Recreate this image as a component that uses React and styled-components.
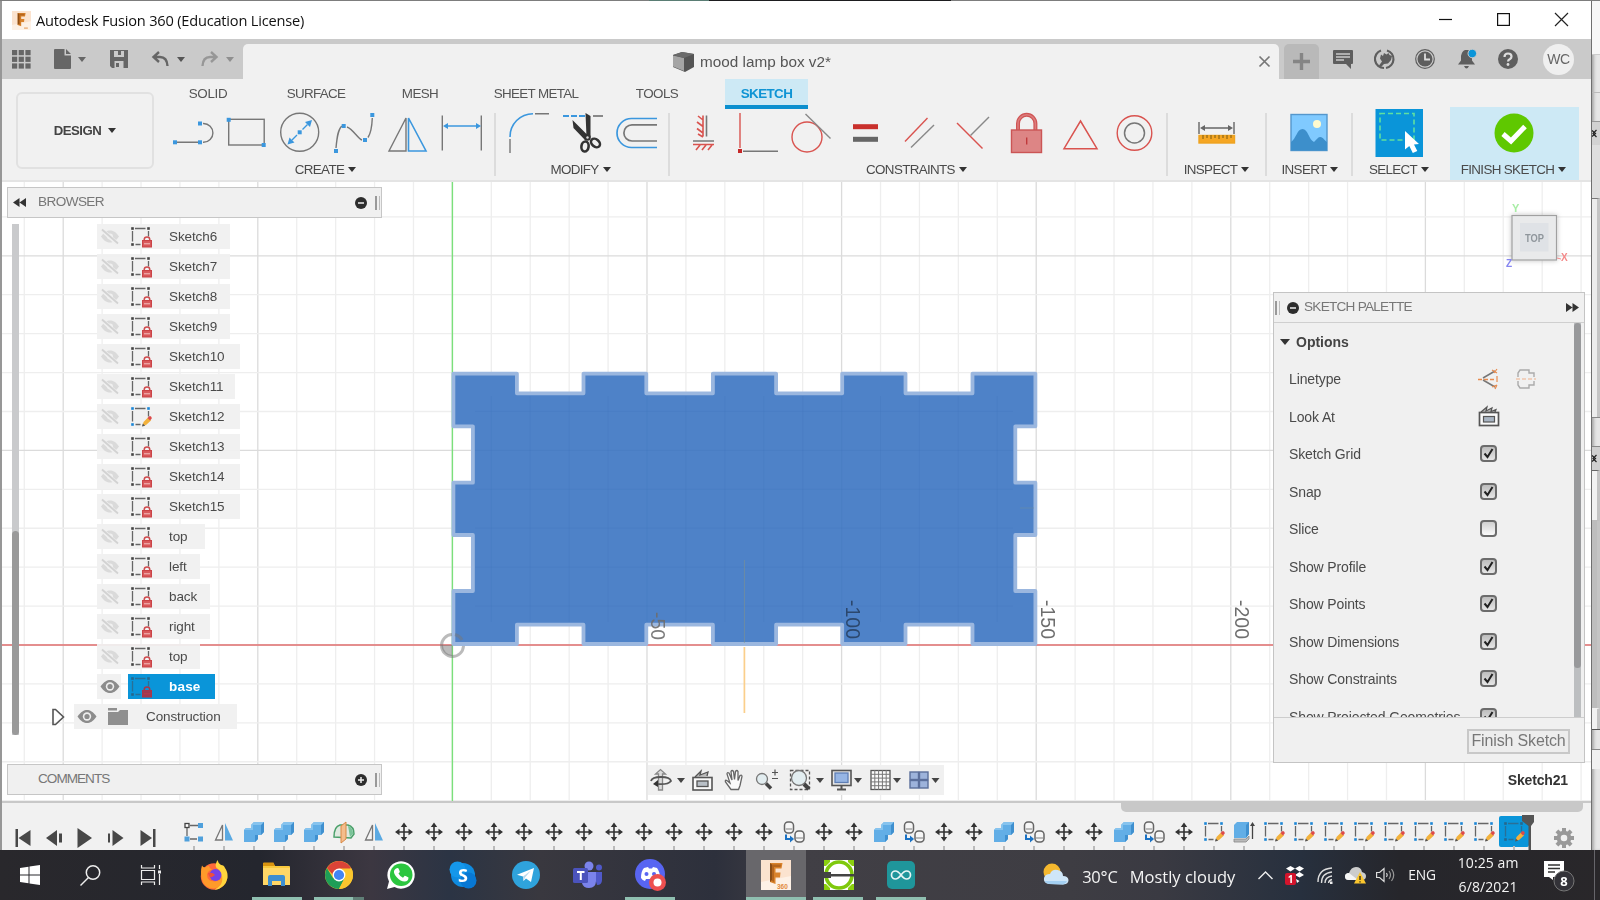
import React from "react";
import styled, { createGlobalStyle, css } from "styled-components";

const GlobalStyle = createGlobalStyle`
  * { box-sizing: border-box; }
  html, body { margin: 0; padding: 0; overflow: hidden; }
  body { font-family: "Liberation Sans", Arial, sans-serif; color: #4c4c4c; background: #e6e6e6; }
  svg { display: block; flex: none; overflow: visible; }
`;

const GREY = "#777";
const BLUE = "#3b97de";
const RED = "#d9534f";
const segoe = css`font-family: "Open Sans", "Noto Sans", sans-serif;`;

/* ---------- frame ---------- */
const Screen = styled.div`
  width: 1600px; height: 900px; display: flex; flex-direction: column; overflow: hidden; background: #e6e6e6;
`;
const TopEdge = styled.div`
  height: 1px; flex: none;
  background: linear-gradient(90deg, #7d7d7d 0 649px, #5a7d74 649px 709px, #1d1d1f 709px 951px, #7d7d7d 951px);
`;
const Desktop = styled.div`display: flex; height: 849px; flex: none;`;
const Window = styled.div`
  width: 1592px; flex: none; display: flex; flex-direction: column; background: #f1f1f1;
  border-left: 2px solid #979797; border-right: 1px solid #6f6f6f; overflow: hidden;
`;

/* ---------- title bar ---------- */
const TitleBar = styled.div`
  height: 38px; flex: none; display: flex; align-items: center; background: #fff; padding-left: 10px;
`;
const AppTitle = styled.div`
  ${segoe} font-size: 14.6px; letter-spacing: -0.2px; color: #111; margin-left: 5px; flex: 1; white-space: nowrap; padding-bottom: 1px;
`;
const WinButton = styled.div`width: 58px; height: 38px; display: flex; align-items: center; justify-content: center; padding-bottom: 1px;`;
const WinButtons = styled.div`display: flex; margin-right: 1px;`;

/* ---------- tab strip ---------- */
const TabStrip = styled.div`height: 40px; flex: none; display: flex; background: #cacaca;`;
const QuickAccess = styled.div`width: 241px; padding-left: 10px; display: flex; align-items: center;`;
const QuickItem = styled.div`
  width: ${(p) => p.$w}px; height: 40px; display: flex; align-items: center; gap: ${(p) => p.$gap || 10}px; opacity: ${(p) => (p.$dim ? 0.5 : 1)};
`;
const DocTab = styled.div`
  width: 1036px; margin-top: 5px; height: 35px; background: #f1f1f1; border-radius: 5px 5px 0 0; display: flex; align-items: center;
  padding: 0 9px 0 430px;
`;
const DocName = styled.div`font-size: 15.3px; color: #555; margin-left: 6px; flex: 1; white-space: nowrap; padding-top: 1px;`;
const NewTab = styled.div`
  width: 35px; height: 35px; margin: 5px 0 0 5px; background: #b9b9b9; border-radius: 5px 5px 0 0; display: flex; align-items: center; justify-content: center;
`;
const StripIcons = styled.div`display: flex; align-items: center; flex: 1; padding-left: 3px;`;
const StripIcon = styled.div`width: 41.4px; height: 40px; display: flex; align-items: center; justify-content: center;`;
const Avatar = styled.div`
  width: 31px; height: 31px; border-radius: 50%; background: #efefef; color: #666; font-size: 14px; margin-left: 14px;
  display: flex; align-items: center; justify-content: center; letter-spacing: -0.4px;
`;

/* ---------- ribbon ---------- */
const Ribbon = styled.div`height: 103px; flex: none; display: flex; background: #f1f1f1; border-bottom: 2px solid #e4e4e4;`;
const WorkspaceButton = styled.div`
  width: 138px; height: 77px; margin: 13px 10px 0 14px; border: 2px solid #e1e1e1; border-radius: 6px;
  display: flex; align-items: center; justify-content: center; gap: 7px; flex: none;
  font-size: 13.2px; font-weight: bold; color: #444; letter-spacing: -0.5px;
`;
const RibbonMain = styled.div`flex: 1; display: flex; flex-direction: column;`;
const RibbonTabs = styled.div`height: 30px; display: flex; flex: none;`;
const RibbonTab = styled.div`
  width: ${(p) => p.$w}px; margin-left: ${(p) => p.$ml}px; height: 30px; display: flex; align-items: center; justify-content: center;
  font-size: 13.4px; letter-spacing: ${(p) => p.$ls ?? -0.55}px; color: #555; white-space: nowrap; padding-bottom: 2px;
  ${(p) => p.$active && css`background: #cde9f5; color: #0f94d4; font-weight: bold; border-bottom: 4px solid #0a8fcf; padding-top: 2px; padding-bottom: 0;`}
`;
const Groups = styled.div`display: flex; height: 73px; margin-top: -2px;`;
const Group = styled.div`
  width: ${(p) => p.$w}px; display: flex; flex-direction: column; align-items: center; flex: none; position: relative;
  background: ${(p) => (p.$finish ? "#cde9f5" : "none")};
  padding-right: ${(p) => p.$pr || 0}px;
  &::after { content: ""; position: absolute; right: 0; top: 6px; height: 63px; width: ${(p) => (p.$last ? 0 : 2)}px; background: #dcdcdc; }
`;
const Tools = styled.div`display: flex; height: 52px; align-items: center;`;
const GroupLabel = styled.div`
  display: flex; align-items: center; gap: 4px; font-size: 13.4px; letter-spacing: -0.65px; color: #4a4a4a; height: 20px; white-space: nowrap;
  padding: 0 ${(p) => p.$padR || 0}px 0 ${(p) => p.$padL || 0}px;
`;
const Caret = styled.i`
  width: 0; height: 0; border: ${(p) => p.$s || 4.5}px solid transparent; border-top: ${(p) => (p.$s || 4.5) + 1}px solid ${(p) => p.$c || "#333"}; border-bottom: 0; flex: none;
`;

/* ---------- viewport ---------- */
const Viewport = styled.div`height: 619px; flex: none; position: relative; background: #fff; overflow: hidden;`;
const Scene = styled.svg`position: absolute; left: 0; top: 0;`;
const Overlay = styled.div`position: relative; height: 100%; display: flex; justify-content: space-between;`;
const LeftColumn = styled.div`width: 375px; margin-left: 5px; padding: 5px 0 6px; display: flex; flex-direction: column;`;
const PanelHead = styled.div`
  height: 31px; flex: none; background: #f0f0f0; border: 1px solid #c6c6c6; display: flex; align-items: center; padding: 0 1px 0 5px;
  font-size: 13.6px; color: #777;
`;
const PanelTitle = styled.div`flex: 1; padding: 0 0 2px ${(p) => p.$pl}px; white-space: nowrap; letter-spacing: ${(p) => p.$ls}px;`;
const Grip = styled.i`width: 5px; height: 14px; border-left: 2px solid #999; border-right: 1px solid #bbb; margin-left: ${(p) => p.$ml ?? 8}px;`;
const TreeArea = styled.div`display: flex; flex: 1; padding-top: 6px;`;
const TreeTrack = styled.div`width: 7px; height: 511px; margin-left: 5px; background: #c9cacc; padding-top: 307px;`;
const TreeThumb = styled.div`height: 204px; background: #9a9a9a; border-radius: 4px;`;
const Tree = styled.div`display: flex; flex-direction: column; gap: 5px; padding-left: 32px;`;
const Row = styled.div`height: 25px; display: flex; align-items: center; margin-left: ${(p) => p.$indent ?? 46}px; position: relative;`;
const Chip = styled.div`
  width: ${(p) => p.$w}px; height: 25px; display: flex; align-items: center; background: rgba(240, 240, 240, 0.95); padding-left: 3px;
`;
const Label = styled.div`font-size: 13.5px; color: #4a4a4a; margin-left: ${(p) => p.$ml ?? 17}px; white-space: nowrap; letter-spacing: -0.1px;`;
const Selected = styled.div`
  width: 87px; height: 25px; background: #0a95d9; display: flex; align-items: center; padding-left: 2px; margin-left: 7px; flex: none;
  ${Label} { color: #fff; font-weight: bold; letter-spacing: 0.2px; }
`;
const NavBar = styled.div`
  align-self: flex-end; margin: 0 0 6px 266px; width: 296px; height: 30px; background: #f0f0f0; display: flex; align-items: center;
`;
const RightColumn = styled.div`width: 312px; margin-right: 6px; display: flex; flex-direction: column; padding-top: 17px; margin-left: auto;`;
const CubeBox = styled.div`height: 93px; display: flex; justify-content: flex-end; padding-right: 22px;`;
const Palette = styled.div`height: 471px; border: 1px solid #c4c4c4; background: #f0f0f0; display: flex; flex-direction: column; flex: none;`;
const PaletteHead = styled.div`
  height: 30px; flex: none; display: flex; align-items: center; border-bottom: 1px solid #cfcfcf; padding: 0 5px 0 1px; font-size: 13.6px; color: #777;
`;
const PaletteBody = styled.div`height: 395px; flex: none; display: flex; overflow: hidden; border-bottom: 1px solid #cdcdcd;`;
const Options = styled.div`flex: 1; padding-left: 6px;`;
const OptionsTitle = styled.div`height: 37px; display: flex; align-items: center; gap: 6px; font-size: 14px; font-weight: bold; color: #444;`;
const Option = styled.div`height: 37.5px; display: flex; align-items: center; font-size: 14px; letter-spacing: -0.12px; color: #4a4a4a; padding-left: 9px;`;
const OptionName = styled.div`width: 186px; white-space: nowrap; padding-top: 1px;`;
const OptionIcons = styled.div`display: flex; gap: 16px; width: 66px; padding-left: ${(p) => p.$pl || 0}px;`;
const Check = styled.div`
  width: 17px; height: 17px; border: 2px solid #6c6c6c; border-radius: 4px; background: linear-gradient(#d0d0d0, #fafafa);
  ${(p) => p.$on && css`background: linear-gradient(#bdbdbd, #e6e6e6);`}
`;
const PaletteTrack = styled.div`width: 7px; background: #bcbec0; margin-right: 3px;`;
const PaletteThumb = styled.div`height: 345px; background: #98999b; border-radius: 4px;`;
const PaletteFoot = styled.div`flex: 1; display: flex; justify-content: flex-end; align-items: center; padding: 2px 14px 0 0;`;
const FinishButton = styled.div`
  width: 103px; height: 25px; border: 2px solid #c8c8c8; background: #ededed; color: #777; font-size: 16px; display: flex; align-items: center; justify-content: center; white-space: nowrap;
  letter-spacing: -0.15px;
`;
const SketchName = styled.div`font-size: 14px; font-weight: bold; color: #333; text-align: right; padding: 9px 17px 0 0; letter-spacing: -0.15px;`;

/* ---------- timeline ---------- */
const Timeline = styled.div`flex: 1; background: #f1f1f1; border-top: 2px solid #c8c8c8; display: flex; position: relative; overflow: hidden;`;
const Playback = styled.div`width: 162px; padding: 25px 0 0 6px; display: flex;`;
const Features = styled.div`display: flex; padding: 13px 0 0 15px;`;
const Feature = styled.div`
  width: 30px; height: 31px; display: flex; align-items: center; justify-content: center; flex: none; position: relative;
  ${(p) => p.$on && css`background: #0a95d9; border-radius: 2px;`}
  &::after { content: ""; position: absolute; left: 14px; top: 30px; width: 2px; height: 8px; background: #bbb; }
`;
const TimelineScroll = styled.div`position: absolute; left: 1119px; top: 0; width: 462px; height: 9px; background: #c8c8c8; border-radius: 0 0 5px 5px;`;
const Marker = styled.svg`position: absolute; left: 1520px; top: 12px;`;
const GearBox = styled.div`padding: 25px 0 0 25px;`;

/* ---------- strip of the window behind ---------- */
const Behind = styled.div`width: 8px; display: flex; flex-direction: column; background: #e6e6e6; box-shadow: inset 3px 0 3px -1px #aaa;`;
const Slice = styled.div`
  height: ${(p) => p.$h}px; flex: none; background: ${(p) => p.$bg || "none"}; border-top: 1px solid ${(p) => p.$t || "transparent"};
  border-right: ${(p) => (p.$r ? "3px solid #c4c4c4" : "0")}; display: flex; align-items: center;
`;

/* ---------- taskbar ---------- */
const Taskbar = styled.div`
  height: 50px; flex: none; display: flex; color: #f4f4f4; ${segoe}
  background: linear-gradient(90deg, #29282c 0, #24262e 260px, #3c3741 370px, #2b3444 450px, #39383f 540px, #2d303c 715px, #413f45 800px, #3e3d43 1070px, #3a3a42 1160px, #27303e 1300px, #26262b 1400px, #29272a 1600px);
`;
const Task = styled.div`
  width: ${(p) => p.$w || 62.4}px; height: 50px; display: flex; align-items: center; justify-content: center; flex: none; position: relative;
  ${(p) => p.$line && css`&::after { content: ""; position: absolute; left: ${p.$x || 6}px; bottom: 0; width: ${p.$line}px; height: 3px; background: #8fbfb0; }`}
  ${(p) => p.$stack && css`&::before { content: ""; position: absolute; left: 46px; bottom: 0; width: 11px; height: 3px; background: #607f77; }`}
`;
const ActivePlate = styled.div`width: 60px; height: 50px; background: #68676b; display: flex; align-items: center; justify-content: center;`;
const Weather = styled.div`display: flex; align-items: center; margin-left: 111px; width: 207px; flex: none;`;
const WeatherText = styled.div`font-size: 16.5px; letter-spacing: ${(p) => p.$ls || 0}px; margin-left: ${(p) => p.$ml}px; white-space: nowrap; padding-top: 3px;`;
const TrayIcon = styled.div`width: 30px; height: 50px; display: flex; align-items: center; justify-content: center; flex: none;`;
const Lang = styled.div`font-size: 13.8px; letter-spacing: -0.1px; width: 44px; text-align: center; line-height: 50px;`;
const Clock = styled.div`width: 96px; text-align: center; font-size: 14px; line-height: 24px; padding-top: 1px; letter-spacing: 0.1px; margin-left: -4px;`;
const Notice = styled.div`width: 46px; height: 50px; display: flex; align-items: center; justify-content: center;`;
const ShowDesktop = styled.div`margin-left: auto; width: 6px; border-left: 1px solid #66656a;`;

/* ---------- small drawings ---------- */
const Tool = ({ children, w = 54 }) => (
  <svg width={w} height="44" viewBox={`${-w / 2} -22 ${w} 44`} fill="none" stroke={GREY} strokeWidth="1.4">{children}</svg>
);
const Dot = ({ x, y, c = BLUE }) => <rect x={x - 2} y={y - 2} width="4" height="4" fill={c} stroke="none" />;

const LineTool = () => <Tool><path d="M-16 9.3H5M10 -9.5h.5a9.4 9.4 0 0 1 0 18.8H10" /><Dot x={-18} y={9.3} /><Dot x={7} y={9.3} /><Dot x={7} y={-9.5} /></Tool>;
const RectTool = () => <Tool><rect x="-18.3" y="-13.7" width="35.5" height="25.7" /><Dot x={-18.3} y={-13.2} /><Dot x={16.7} y={12} /></Tool>;
const CircleTool = () => (
  <Tool><circle cx="-1.3" cy="-.7" r="19" /><path d="M-9 7L-4 2M1.500 -3.500L6.500 -8.500" stroke={BLUE} /><path d="M11 -13l-2 7-5-5zM-13.500 11.500l2-7 5 5z" fill={BLUE} stroke="none" /><Dot x={-1.3} y={-.7} /></Tool>
);
const SplineTool = () => (
  <Tool><path d="M-19 15C-18 4 -17 -4 -13 -7M-8 -6C-2 -4 3 6 7 7M13 4.500C16 0 17 -8 17.300 -15" /><Dot x={-19} y={18} /><Dot x={-11.3} y={-7} /><Dot x={10} y={7} /><Dot x={17.3} y={-18} /></Tool>
);
const MirrorTool = () => <Tool><path d="M-20 18H-3V-15z" /><path d="M-.5 -15V18H17z" stroke={BLUE} strokeWidth="1.6" /></Tool>;
const DimTool = () => <Tool><path d="M-20.700 -17.500V17.500M18.300 -17.500V17.500" /><path d="M-18 -7H16" stroke={BLUE} strokeWidth="1.500" /><path d="M-20 -7l5-3v6zM18 -7l-5-3v6z" fill={BLUE} stroke="none" /></Tool>;
const FilletTool = () => <Tool><path d="M-19 4A23 23 0 0 1 4 -19.300" stroke={BLUE} strokeWidth="1.600" /><path d="M6 -19.300H20M-19 6V20" /></Tool>;
const TrimTool = () => (
  <Tool>
    <path d="M-20 -17H2" stroke={BLUE} strokeWidth="1.800" strokeDasharray="6 2" /><path d="M10 -17H20" strokeWidth="1.700" />
    <path d="M2.500 -20L7.500 -17V4H3.500zM-10.500 -13L5 2.500 2 7 -9.500 -5z" fill="#333" stroke="none" />
    <g stroke="#333" strokeWidth="2.600"><ellipse cx="2" cy="13.500" rx="3.600" ry="5" transform="rotate(8 2 13.500)" /><ellipse cx="12.500" cy="10" rx="3.600" ry="5" transform="rotate(-50 12.500 10)" /></g>
    <circle cx="4.500" cy="4.500" r="3.300" fill="#333" stroke="none" /><circle cx="4.500" cy="4.500" r="1.200" fill="#ddd" stroke="none" />
  </Tool>
);
const OffsetTool = () => <Tool><path d="M20 -14.500H-5.500a14.300 14.300 0 0 0 0 29H20" stroke={BLUE} strokeWidth="1.700" /><path d="M20 -8.200H-5a8.100 8.100 0 0 0 0 16.200H20" strokeWidth="1.700" /></Tool>;
const HVTool = () => (
  <Tool>
    <path d="M3.500 -17.500V3.500M-10 8H11" strokeWidth="1.600" />
    <path d="M0 -17.500V3.500M-10 11.500H11M0 -13l-5-4M0 -6.500l-6-4.500M0 0l-6-4.500M0 4l-5-3M-3 12l-4 5M3 12l-4 5M9 12l-4 5" stroke={RED} strokeWidth="1.600" />
  </Tool>
);
const CoincidentTool = () => <Tool><path d="M-17 -20V15" stroke={RED} /><path d="M-14 18.300H21" strokeWidth="1.500" /><Dot x={-17} y={18} c="#c62828" /></Tool>;
const TangentTool = () => <Tool><circle cx="-4" cy="4" r="15" stroke={RED} /><path d="M-5.500 -19L19.500 5.500" stroke="#888" /></Tool>;
const EqualTool = () => <Tool><path d="M-12 -6.300H13" stroke="#c9302c" strokeWidth="5" /><path d="M-12 6.300H13" stroke="#666" strokeWidth="5" /></Tool>;
const ParallelTool = () => <Tool><path d="M-14 8.500L8.500 -15" stroke={RED} /><path d="M-8 14.500L15 -8" stroke="#888" /></Tool>;
const PerpTool = () => <Tool><path d="M-16 -10L9.500 15.500" stroke={RED} /><path d="M-2.500 2.500L16 -16" stroke="#888" /></Tool>;
const LockTool = () => (
  <Tool>
    <path d="M-9 -3v-6.500a8.700 8.700 0 0 1 17.400 0V-3" stroke="#cf5454" strokeWidth="4" /><path d="M-9 -3v-6.500a8.700 8.700 0 0 1 17.400 0V-3" stroke="#dd7c7c" strokeWidth="1.600" />
    <rect x="-15.500" y="-3" width="30" height="22.500" fill="#dd8585" stroke="#cb5555" /><path d="M-.3 4.500v7" stroke="#c0393b" />
  </Tool>
);
const SymmetryTool = () => <Tool><path d="M-.5 -12L16 15.700H-17z" stroke={RED} strokeWidth="1.500" /></Tool>;
const ConcentricTool = () => <Tool><circle r="17.300" cx="-.5" stroke={RED} /><circle r="10" cx="-.5" strokeWidth="1.500" /></Tool>;
const InspectTool = () => (
  <Tool><path d="M-18 -11V1M17 -11V1M-15 -5H14" stroke="#666" /><path d="M-17 -5l5-3v6zM16 -5l-5-3v6z" fill="#666" stroke="none" /><rect x="-18" y="2.500" width="35.500" height="7.500" fill="#f5a623" stroke="#eea320" /><path d="M-14 2v4M-10 2v3M-6 2v4M-2 2v3M2 2v4M6 2v3M10 2v4M14 2v3" stroke="#7a5a10" strokeWidth="1" /></Tool>
);
const InsertTool = () => (
  <Tool><rect x="-18" y="-18.500" width="36" height="36" fill="#80caff" stroke="#5597cc" /><path d="M-18 9C-13 6 -12 -4 -6.500 -4S0 7 5 9C8 6 9 4 11.500 4S16 8 18 9V17.500H-18z" fill="#3d8fcb" stroke="none" /><circle cx="8" cy="-9" r="4" fill="#fffbcf" stroke="none" /></Tool>
);
const SelectTool = () => (
  <Tool><rect x="-23.500" y="-24" width="47.500" height="48" fill="#0a95d9" stroke="none" /><rect x="-19" y="-19.500" width="34" height="26.500" stroke="#5fe0a0" strokeWidth="1.600" strokeDasharray="5 3" /><path d="M6 -2V16.500l4.300-3.500 3.500 7 4.500-2-3.300-6.500 5-.5z" fill="#fff" stroke="none" /></Tool>
);
const FinishTool = () => <Tool><circle cx="0" cy="0" r="19.500" fill="#5fc800" stroke="none" /><path d="M-11 1L-3 8 11 -6.500" stroke="#fff" strokeWidth="5" /></Tool>;

const EyeOff = () => (
  <svg width="20" height="17" viewBox="0 0 20 17"><path d="M1 8.500C4 4 7 2.500 10 2.500S16 4 19 8.500C16 13 13 14.500 10 14.500S4 13 1 8.500z" fill="#dadada" /><circle cx="10" cy="8.500" r="3" fill="#f0f0f0" /><path d="M1.500 1.500L17.500 16" stroke="#f0f0f0" strokeWidth="4" /><path d="M2 1.500L18 15.500" stroke="#d2d2d2" strokeWidth="1.800" /></svg>
);
const Eye = () => (
  <svg width="20" height="17" viewBox="0 0 20 17"><path d="M.5 8.500C4 3.500 7 2 10 2s6 1.500 9.500 6.500C16 13.500 13 15 10 15S4 13.500.5 8.500z" fill="#8c8c8c" /><circle cx="10" cy="8.500" r="4.200" fill="#eee" /><circle cx="10" cy="8.500" r="2.600" fill="#8c8c8c" /></svg>
);
const SketchGlyph = ({ pencil, dim }) => {
  const c = pencil ? "#1b86d6" : "#444";
  return (
    <svg width="22" height="22" viewBox="0 0 22 22">
      <path d="M5 2.500H15.500M2.500 5V15.500M5.500 18.500H10.500M18.500 5v5.500" stroke={dim ? "#2a6f96" : "#666"} strokeWidth="1.300" fill="none" />
      {[[1.2, 1.2], [17.2, 1.2], [1.2, 17.2]].map(([x, y]) => <rect key={x + "-" + y} x={x} y={y} width="2.600" height="2.600" fill={dim ? "#27678c" : c} />)}
      {pencil ? (
        <><path d="M12.500 20l1-4 4.500-4.500 3 3L16 19z" fill="#f2b13c" /><path d="M12 20.500l.8-3 2.400 2.200z" fill="#555" /><path d="M17.500 12l1.500-1.500q1-1 2.200.2t.2 2.300L20 14.500z" fill="#dc4a4a" /></>
      ) : (
        <><path d="M14.200 14.500v-.8a2.800 2.700 0 0 1 5.600 0v.8" stroke={dim ? "#a8364a" : "#cf4d50"} strokeWidth="1.500" fill="none" /><rect x="12.500" y="14.500" width="9" height="6.500" fill={dim ? "#a03a50" : "#d8575a"} stroke={dim ? "#a8364a" : "#c94447"} /><path d="M14 17.700h6" stroke={dim ? "#b03a4c" : "#eea0a0"} strokeWidth="1.500" /></>
      )}
    </svg>
  );
};
const Move = () => (
  <svg width="18" height="20" viewBox="-9 -10 18 20"><path d="M0 -7V7M-7 0H7" stroke="#333" strokeWidth="1.600" /><path d="M0 -9.500l3.200 4.500h-6.400zM0 9.500l3.200-4.500h-6.400zM-9 0l4.500-3.200v6.400zM9 0l-4.500-3.200v6.400z" fill="#333" /></svg>
);
const Combine = () => (
  <svg width="22" height="22" viewBox="0 0 22 22"><path d="M1 9l2-2h5V4l3-3h10v10l-3 3h-3v4l-3 3H1z" fill="#62aee6" /><path d="M1 9l2-2h5V4l3-3h10l-2 3H10v5z" fill="#86c3ee" /><path d="M21 1v10l-3 3V4zM15 14v4l-3 3v-7z" fill="#3f90cf" /></svg>
);
const Joint = () => (
  <svg width="22" height="22" viewBox="0 0 22 22"><g fill="#f6f6f6" stroke="#666" strokeWidth="1.500"><rect x="1.500" y="1" width="9" height="11" rx="3.500" /><rect x="12" y="10" width="9" height="11" rx="3.500" /></g><path d="M2.500 8h7M13 17h7" stroke="#bbb" strokeWidth="2" /><path d="M3 13.500V18h5" stroke="#1a72c4" strokeWidth="2" fill="none" /><path d="M7 14.500l4 3.500-4 3.500z" fill="#1a72c4" /></svg>
);
const MirrorFeature = () => <svg width="20" height="20" viewBox="0 0 20 20"><path d="M1.500 18H8.500V3z" fill="#f4f4f4" stroke="#777" strokeWidth="1.300" /><path d="M11 1L19 18.500H11z" fill="#5aa9e2" /></svg>;
const Pattern = () => (
  <svg width="20" height="20" viewBox="0 0 20 20"><path d="M6 3.500h8M3 6v8M6 17h7" stroke="#666" strokeWidth="1.300" /><rect x="1" y="1.500" width="4" height="4" fill="#fff" stroke="#444" strokeWidth="1.300" /><g fill="#4fa0dc"><rect x="14" y="1" width="5" height="5" /><rect x="0.500" y="14.500" width="5" height="5" /><rect x="14" y="14.500" width="5" height="5" /></g></svg>
);
const Split = () => (
  <svg width="22" height="22" viewBox="0 0 22 22"><path d="M1 16C1 9 3 5 7 4h8c4 1 6 5 6 9l-3 4z" fill="#dfe9e0" stroke="#4aa06a" strokeWidth="1.500" /><path d="M15 5c4 1 5 4 5 8l-3 3z" fill="#79c398" /><path d="M8 5l5-4v17l-5 4z" fill="#f4bd8c" stroke="#d98845" /></svg>
);
const Extrude = () => (
  <svg width="22" height="22" viewBox="0 0 22 22"><path d="M1 18h12l3-3v3l-3 3H1z" fill="#b9b9b9" stroke="#888" strokeWidth=".8" /><path d="M1 4l3-3h12v12l-3 4H1z" fill="#62aee6" /><path d="M16 1v12l-3 4V4z" fill="#3f90cf" /><path d="M19.500 18V4" stroke="#444" strokeWidth="1.300" /><path d="M17 5l2.500-4L22 5z" fill="#444" /></svg>
);
const LookAt = () => (
  <svg width="22" height="22" viewBox="0 0 22 22"><path d="M3 7l6-5-1 4 6-3-1 3.500 5-2-1 2.500" fill="#bbb" stroke="#555" strokeWidth="1.200" /><rect x="1.500" y="7.500" width="19" height="13" fill="#fafafa" stroke="#555" strokeWidth="1.700" /><rect x="5.500" y="11.500" width="11" height="5.500" fill="#a8b4c2" stroke="#555" strokeWidth="1.200" /></svg>
);
const Tick = () => <svg width="13" height="13" viewBox="0 0 13 13"><path d="M2.500 6.500l3 3.500 5-8" stroke="#222" strokeWidth="2" fill="none" /></svg>;
const Bullet = ({ plus }) => <svg width="12" height="12" viewBox="0 0 12 12"><circle cx="6" cy="6" r="6" fill="#2d2d2d" /><path d={plus ? "M3 6h6M6 3v6" : "M3 6h6"} stroke="#f0f0f0" strokeWidth="1.500" /></svg>;
const Rewind = ({ flip }) => <svg width="13" height="9" viewBox="0 0 13 9"><path d={flip ? "M6.500 0v9L13 4.500zM0 0v9L6.500 4.500z" : "M6.500 0v9L0 4.500zM13 0v9L6.500 4.500z"} fill="#333" /></svg>;

const FusionLogo = ({ s, big }) => (
  <svg width={s} height={s} viewBox="0 0 30 30"><rect width="30" height="30" fill="#fbe3cf" /><path d="M0 22l30-6v14H0z" fill="#fdf1e6" /><path d="M9 3h12.500l-1 5.500h-6v4h5l-.5 5h-4.500V24l-5.500-2z" fill="#d9822b" /><path d="M9 3l2 1.500V20l-2 2z" fill="#8a4d16" /><path d="M11 4.500h9l-.5 2.500H13v15l-2-1z" fill="#b5651d" />{big ? <text x="16" y="28.500" fontSize="6.500" fontWeight="bold" fill="#e28a3c" fontFamily="Liberation Sans">360</text> : <path d="M19 27h6" stroke="#e9a76b" strokeWidth="2" />}</svg>
);

/* ---------- scene ---------- */
const OX = 450.4;
const OY = 463;
const STEP = 38.92;
const Grid = () => {
  const lines = [];
  for (let i = -11; i <= 29; i++) {
    const x = OX + i * STEP;
    lines.push(<path key={"v" + i} d={`M${x} 0V621`} stroke={i % 5 ? "#eeeeee" : "#dbdbdb"} strokeWidth={1.3} />);
  }
  for (let j = -11; j <= 4; j++) {
    const y = OY + j * STEP;
    lines.push(<path key={"h" + j} d={`M0 ${y}H1590`} stroke={j % 5 ? "#eeeeee" : "#dbdbdb"} strokeWidth={1.3} />);
  }
  return <g>{lines}</g>;
};
const BOARD = "M451.400 191.600H514.900V211.300H581.500V191.600H644.300V211.300H710.900V191.600H774.100V211.300H840.200V191.600H903.500V211.300H970.500V191.600H1033.400V244.300H1013.300V300.700H1033.400V353H1013.300V409H1033.400V462H970.500V442.700H903.500V462H840.200V442.700H774.100V462H710.900V442.700H644.300V462H581.500V442.700H514.900V462H451.400V409H470.900V353H451.400V300.700H470.900V244.300H451.400Z";
const AxisLabel = ({ x, y, len, o = 1, children }) => (
  <text transform={`translate(${x} ${y}) rotate(90)`} fontSize="20" textLength={len} lengthAdjust="spacingAndGlyphs" fill="#6e6e6e" opacity={o}>{children}</text>
);
const ModelScene = () => (
  <Scene width="1589" height="621" viewBox="0 0 1589 621" fill="none">
    <Grid />
    <path d={`M0 ${OY}H1590`} stroke="#e47272" strokeWidth="1.400" />
    <path d={`M${OX} 0V621`} stroke="#7be07b" strokeWidth="1.400" />
    <path d={BOARD} fill="#4e82c8" stroke="#9bb7df" strokeWidth="3.800" strokeLinejoin="round" />
    <g stroke="#3d70b8" strokeOpacity=".18">
      {[1, 2, 3, 4, 5, 6, 7, 8, 9, 10, 11, 12, 13, 14].map((i) => <path key={i} d={`M${OX + i * STEP} 214V440`} />)}
      {[1, 2, 3, 4, 5, 6].map((i) => <path key={i} d={`M473 ${OY - i * STEP}H1011`} />)}
    </g>
    <path d="M742.400 378V461" stroke="#8b9480" strokeOpacity=".5" /><path d="M742.400 465V531" stroke="#fbcf8b" strokeWidth="1.700" />
    <path d="M1018 326h14" stroke="#6f8f9e" strokeOpacity=".5" />
    <AxisLabel x={649} y={430} len={28} o={0.9}>-50</AxisLabel>
    <g style={{ mixBlendMode: "multiply" }}><AxisLabel x={843.500} y={418} len={39} o={0.8}>-100</AxisLabel></g>
    <AxisLabel x={1038.500} y={418} len={39}>-150</AxisLabel>
    <AxisLabel x={1233} y={418} len={39}>-200</AxisLabel>
    <path d="M450 452.500A11 11 0 1 0 461.500 464M453 452.500A11 11 0 0 1 460 458" stroke="#777" strokeOpacity=".5" strokeWidth="3" />
    <path d="M450.400 463V474A11 11 0 0 1 439.400 463z" fill="#777" fillOpacity=".5" />
  </Scene>
);
const ViewCube = () => (
  <svg width="60" height="72" viewBox="1503 200 60 72">
    <defs><filter id="cubeShade" x="-20%" y="-20%" width="140%" height="140%"><feDropShadow dx="0" dy="0" stdDeviation="2.500" floodOpacity=".25" /></filter></defs>
    <rect x="1512" y="216.500" width="44.500" height="44.500" fill="#e9eaeb" stroke="#a0a0a0" strokeWidth="1.200" filter="url(#cubeShade)" />
    <rect x="1520" y="224" width="28.500" height="28.500" fill="#dfe2e6" />
    <g fontFamily="Liberation Sans" fontSize="10" fontWeight="bold">
      <text x="1525" y="242.500" fill="#8f969c" fontSize="10.500" textLength="19" lengthAdjust="spacingAndGlyphs">TOP</text>
      <text x="1512" y="213" fill="#a8eda5" fontSize="11">Y</text><text x="1561" y="262" fill="#f48a8a">X</text><text x="1506" y="268" fill="#8585f0">Z</text>
    </g>
    <path d="M1557 259l4 1" stroke="#f48a8a" />
  </svg>
);

/* ---------- data ---------- */
const TABS = [["SOLID", 60, 14, -0.3], ["SURFACE", 80, 38, -0.65], ["MESH", 60, 34, -0.6], ["SHEET METAL", 110, 31, -0.65], ["TOOLS", 60, 36, -0.55]];
const ROWS = [["Sketch6", 133], ["Sketch7", 133], ["Sketch8", 133], ["Sketch9", 133], ["Sketch10", 143], ["Sketch11", 138], ["Sketch12", 143, true], ["Sketch13", 143], ["Sketch14", 143], ["Sketch15", 143], ["top", 108], ["left", 103], ["back", 113], ["right", 113], ["top", 103]];
const OPTIONS = ["Sketch Grid", "Snap", "Slice", "Show Profile", "Show Points", "Show Dimensions", "Show Constraints", "Show Projected Geometries"];
const KINDS = { p: Pattern, m: MirrorFeature, c: Combine, s: Split, x: Move, j: Joint, e: Extrude };
const HISTORY = "pmcccsm" + "x".repeat(13) + "jxxcjxxcjxxcjx" + "kekkkkkkkk";

const Grp = ({ label, padL, padR, children, ...rest }) => (
  <Group {...rest}><Tools>{children}</Tools><GroupLabel $padL={padL} $padR={padR}>{label}<Caret /></GroupLabel></Group>
);

const AppRibbon = () => (
  <Ribbon>
    <WorkspaceButton>DESIGN<Caret $s={4.5} /></WorkspaceButton>
    <RibbonMain>
      <RibbonTabs>
        {TABS.map(([t, w, ml, ls]) => <RibbonTab key={t} $w={w} $ml={ml} $ls={ls}>{t}</RibbonTab>)}
        <RibbonTab $w={83} $ml={38} $active $ls={-0.6}>SKETCH</RibbonTab>
      </RibbonTabs>
      <Groups>
        <Grp label="CREATE" padR={5} $w={332} $pr={4}><LineTool /><RectTool /><CircleTool /><SplineTool /><MirrorTool /><DimTool /></Grp>
        <Grp label="MODIFY" padR={5} $w={174}><FilletTool /><TrimTool /><OffsetTool /></Grp>
        <Grp label="CONSTRAINTS" padR={5} $w={498}><HVTool /><CoincidentTool /><TangentTool /><EqualTool /><ParallelTool /><PerpTool /><LockTool /><SymmetryTool /><ConcentricTool /></Grp>
        <Grp label="INSPECT" padR={1} $w={99} $pr={1}><InspectTool /></Grp>
        <Grp label="INSERT" padL={3} $w={86} $pr={3}><InsertTool /></Grp>
        <Grp label="SELECT" $w={97} $pr={5} $last><SelectTool /></Grp>
        <Grp label="FINISH SKETCH" $w={129} $finish $last $pr={2}><FinishTool /></Grp>
      </Groups>
    </RibbonMain>
  </Ribbon>
);

const AppTabStrip = () => (
  <TabStrip>
    <QuickAccess>
      <QuickItem $w={42}><svg width="19" height="19" viewBox="0 0 19 19" fill="#666">{[0, 6.7, 13.4].map((y) => [0, 6.7, 13.4].map((x) => <rect key={x + "," + y} x={x} y={y} width="5.200" height="5.200" />))}</svg></QuickItem>
      <QuickItem $w={56} $gap={7}><svg width="17" height="20" viewBox="0 0 17 20"><path d="M1 0h9.500v6.500H17V19q0 1-1 1H1q-1 0-1-1V1q0-1 1-1zM12 0l5 5h-5z" fill="#666" /></svg><Caret $c="#666" $s={4.5} /></QuickItem>
      <QuickItem $w={42}><svg width="18" height="18" viewBox="0 0 18 18"><path d="M0 0h18v18H2L0 16z" fill="#666" /><path d="M4 1h10v6H4zM4.500 11h9v7h-9z" fill="#cacaca" /><path d="M8 1h3v4H8zM6 13h3v4H6z" fill="#666" /></svg></QuickItem>
      <QuickItem $w={49} $gap={8}><svg width="17" height="16" viewBox="0 0 17 16"><path d="M7 1L1.500 6 7 11M2 6h6q7 0 7.500 9" fill="none" stroke="#666" strokeWidth="2.400" /></svg><Caret $c="#555" $s={4.5} /></QuickItem>
      <QuickItem $w={40} $gap={8} $dim><svg width="17" height="16" viewBox="0 0 17 16"><path d="M10 1l5.500 5L10 11M15 6H9Q2 6 1.500 15" fill="none" stroke="#666" strokeWidth="2.400" /></svg><Caret $c="#555" $s={4.5} /></QuickItem>
    </QuickAccess>
    <DocTab>
      <svg width="21" height="20" viewBox="0 0 21 20"><path d="M0 3l9-3 12 2v13l-9 5-12-5z" fill="#555" /><path d="M0 3.500l11 2.500v13L0 14.500z" fill="#a5a5a5" /><path d="M0 3l9-3 12 2-10 4z" fill="#6b6b6b" /></svg>
      <DocName>mood lamp box v2*</DocName>
      <svg width="11" height="11" viewBox="0 0 11 11"><path d="M.5 .5l10 10M10.500 .5l-10 10" stroke="#777" strokeWidth="1.700" /></svg>
    </DocTab>
    <NewTab><svg width="17" height="17" viewBox="0 0 17 17"><path d="M8.500 0v17M0 8.500h17" stroke="#858585" strokeWidth="3.400" /></svg></NewTab>
    <StripIcons>
      <StripIcon><svg width="20" height="19" viewBox="0 0 20 19"><path d="M1 0h18q1 0 1 1v12q0 1-1 1h-1v5l-5-5H1q-1 0-1-1V1q0-1 1-1z" fill="#5e5e5e" /><path d="M3 4h14M3 7h14M3 10h8" stroke="#cacaca" strokeWidth="1.300" /></svg></StripIcon>
      <StripIcon><svg width="20" height="20" viewBox="0 0 20 20"><path d="M7 1.500A9 9 0 0 0 10 19M13 1.500A9 9 0 0 1 12 19" fill="none" stroke="#5e5e5e" strokeWidth="2.200" /><path d="M5 16.500l3-4-2-3 1-4 2 1.500 1-3 2.500 1.500 2-1.500 1 2 2.500 1-1 4-3 3.500-4 .5-3 3z" fill="#5e5e5e" /></svg></StripIcon>
      <StripIcon><svg width="20" height="20" viewBox="0 0 20 20"><circle cx="10" cy="10" r="9.300" fill="none" stroke="#5e5e5e" strokeWidth="1.200" /><circle cx="10" cy="10" r="7.500" fill="#5e5e5e" /><path d="M10 4.500V10.500h5" stroke="#ddd" strokeWidth="1.800" fill="none" /></svg></StripIcon>
      <StripIcon><svg width="20" height="20" viewBox="0 0 20 20"><path d="M1 15.500l3-4V7q1-5 4-6h3q3 1 4 6v4.500l3 4zM7 17h5q-2.500 5-5 0z" fill="#5e5e5e" /><circle cx="15.300" cy="4.500" r="4.300" fill="#0a95d9" stroke="#cacaca" /></svg></StripIcon>
      <StripIcon><svg width="20" height="20" viewBox="0 0 20 20"><circle cx="10" cy="10" r="10" fill="#5e5e5e" /><path d="M6.500 8q0-3.500 3.500-3.500T13.500 7.500q0 1.500-1.500 2.500-2 1-2 2.500" stroke="#ddd" strokeWidth="2.200" fill="none" /><circle cx="10" cy="15.500" r="1.400" fill="#ddd" /></svg></StripIcon>
      <Avatar>WC</Avatar>
    </StripIcons>
  </TabStrip>
);

const NavIcons = () => (
  <svg width="296" height="30" viewBox="0 0 296 30" fill="none" stroke="#555" strokeWidth="1.300">
    <path d="M10.500 9v16h4V9h3l-5-4.500L7.500 9z" fill="#ddd" stroke="#888" /><path d="M3 16q1-4 10-4t10 4q-3 4-14 3" strokeWidth="1.800" /><path d="M10 15v7l-5-3z" fill="#333" stroke="none" />
    <g transform="translate(44 4)"><path d="M3 8l6-6-1 4 8-3-1 4" fill="#bbb" /><rect x="1" y="8.500" width="19" height="12.500" fill="#fafafa" strokeWidth="1.600" /><rect x="5" y="12" width="11" height="5.500" fill="#b9c0c7" /></g>
    <path d="M83 24.500l-5.500-7.500q-1-3 2-1l2.500 2-3-9q0-2 2-1l3 7-1-8.500q1-2 2.500 0l1 8 1-8q1.500-2 2.500 0v9l2-5q2-1 2 1l-2 9-1.500 4z" fill="#fafafa" stroke="#666" />
    <circle cx="114" cy="14" r="5.500" fill="#e2edf0" stroke="#777" /><path d="M118 18.500l5 5" stroke="#444" strokeWidth="3.500" /><path d="M124 7.500h6M127 4.500v6M124 13.500h6" strokeWidth="1.200" />
    <rect x="142.500" y="5.500" width="19" height="19" strokeDasharray="3 2" /><circle cx="151" cy="13" r="7.500" fill="#e2edf0" stroke="#777" /><path d="M156 19l5 5" stroke="#444" strokeWidth="4" />
    <rect x="184" y="5.500" width="19" height="15" fill="#e7e7e7" strokeWidth="1.600" /><rect x="187" y="8" width="13" height="9.500" fill="#96b5e4" stroke="#5f7fb5" /><path d="M189 24.500h9M193.500 21v3" strokeWidth="2" />
    <rect x="223" y="5.500" width="19" height="19" fill="#fbfbfb" stroke="#555" /><path d="M226.800 5v20M230.600 5v20M234.400 5v20M238.200 5v20M223 9.300h19M223 13.100h19M223 16.900h19M223 20.700h19" stroke="#777" strokeWidth="1" />
    <g fill="#9db3db" stroke="#5b6f9b" strokeWidth="1.400"><rect x="262" y="7" width="8.500" height="7.500" /><rect x="271.500" y="7" width="8.500" height="7.500" /><rect x="262" y="15.500" width="8.500" height="7.500" /><rect x="271.500" y="15.500" width="8.500" height="7.500" /></g>
    <g fill="#444" stroke="none">{[33, 172, 210, 249, 287.500].map((x) => <path key={x} d={`M${x - 4} 13h8l-4 5z`} />)}</g>
  </svg>
);

const BrowserTree = () => (
  <TreeArea>
    <TreeTrack><TreeThumb /></TreeTrack>
    <Tree>
      {ROWS.map(([t, w, pencil], i) => (
        <Row key={i}><Chip $w={w}><EyeOff /><svg width="10" height="1" /><SketchGlyph pencil={pencil} /><Label>{t}</Label></Chip></Row>
      ))}
      <Row><Chip $w={24}><Eye /></Chip><Selected><SketchGlyph dim /><Label $ml={17}>base</Label></Selected></Row>
      <Row $indent={0}>
        <svg width="23" height="18" viewBox="0 0 23 18"><path d="M2 1.500v15h2.500l8-7.500-8-7.500z" fill="none" stroke="#555" strokeWidth="1.600" /></svg>
        <Chip $w={163}><Eye /><svg width="11" height="1" /><svg width="20" height="17" viewBox="0 0 20 17"><path d="M0 0h9v2.500H0zM0 4h10l2-2h8v15H0z" fill="#8f8f8f" /></svg><Label $ml={18}>Construction</Label></Chip>
      </Row>
    </Tree>
  </TreeArea>
);

const SketchPalette = () => (
  <Palette>
    <PaletteHead><Grip $ml={0} /><svg width="7" height="1" /><Bullet /><PanelTitle $pl={5} $ls={-0.75}>SKETCH PALETTE</PanelTitle><Rewind flip /></PaletteHead>
    <PaletteBody>
      <Options>
        <OptionsTitle><Caret $s={5} />Options</OptionsTitle>
        <Option><OptionName>Linetype</OptionName><OptionIcons $pl={3}>
          <svg width="22" height="20" viewBox="0 0 22 20" fill="none"><path d="M5 9L17 2M5 11L17 18" stroke="#777" strokeWidth="1.500" /><path d="M0 10.500h16" stroke="#e88b4e" strokeWidth="1.500" strokeDasharray="4 2" /><path d="M14 1l5 3M19 0l-3 4M19 7v6M14 18l5-2M17 20l2-4" stroke="#e88b4e" strokeWidth="1.200" /></svg>
          <svg width="20" height="20" viewBox="0 0 20 20" fill="none"><path d="M2 8V4l2-3h9v3h5v4M2 12v4l2 3h9v-3h5v-4" stroke="#aaa" strokeWidth="1.400" /><path d="M0 10h20" stroke="#efb08a" strokeDasharray="4 2" /></svg>
        </OptionIcons></Option>
        <Option><OptionName>Look At</OptionName><OptionIcons $pl={3}><LookAt /></OptionIcons></Option>
        {OPTIONS.map((o) => <Option key={o}><OptionName>{o}</OptionName><OptionIcons $pl={5}><Check $on={o !== "Slice"}>{o !== "Slice" && <Tick />}</Check></OptionIcons></Option>)}
      </Options>
      <PaletteTrack><PaletteThumb /></PaletteTrack>
    </PaletteBody>
    <PaletteFoot><FinishButton>Finish Sketch</FinishButton></PaletteFoot>
  </Palette>
);

const AppTimeline = () => (
  <Timeline>
    <Playback>
      <svg width="150" height="20" viewBox="8 0 150 20" fill="#484848">
        <path d="M15.500 1h2.500v18h-2.500zM30.500 2v16L18.500 10zM57 2v16L46 10zM59 5.500h3v9h-3zM77.500 0v20L92 10zM108 5.500h2v9h-2zM112.500 2v16l11-8zM140.500 2v16l11.500-8zM153 1h2.500v18H153z" />
      </svg>
    </Playback>
    <Features>
      {HISTORY.split("").map((k, i) => { const K = KINDS[k]; return <Feature key={i}>{K ? <K /> : <SketchGlyph pencil />}</Feature>; })}
      <Feature $on><SketchGlyph pencil dim /></Feature>
    </Features>
    <GearBox><svg width="20" height="20" viewBox="-10 -10 20 20"><circle r="5.300" fill="none" stroke="#999" strokeWidth="4" />{[0, 45, 90, 135, 180, 225, 270, 315].map((a) => <rect key={a} x="-2" y="-10" width="4" height="4" fill="#999" transform={`rotate(${a})`} />)}</svg></GearBox>
    <TimelineScroll />
    <Marker width="13" height="38" viewBox="0 0 13 38"><path d="M0 0h12v7l-3 4v27H6.500V11L0 6z" fill="#555" /></Marker>
  </Timeline>
);

const AppTaskbar = () => (
  <Taskbar>
    <Task $w={60}><svg width="20" height="20" viewBox="0 0 20 20" fill="#fff"><path d="M0 3l8.500-1.300V9.500H0zM9.500 1.500L20 0v9.500H9.500zM0 10.500h8.500v7.800L0 17zM9.500 10.500H20V20L9.500 18.500z" /></svg></Task>
    <Task $w={60}><svg width="21" height="21" viewBox="0 0 21 21" fill="none" stroke="#eee" strokeWidth="1.500"><circle cx="13" cy="7.500" r="6.700" /><path d="M8.500 12.500L.5 20.500" /></svg></Task>
    <Task $w={61}><svg width="20" height="20" viewBox="0 0 20 20" fill="none" stroke="#eee" strokeWidth="1.200"><path d="M.5 0v3h13V0M.5 20v-3h13v3M.5 5.500h13v9H.5zM18.500 0v4M18.500 9v11" /><path d="M17 5.500h3v3h-3z" fill="#eee" stroke="none" /></svg></Task>
    <Task $w={65}><svg width="30" height="30" viewBox="0 0 30 30"><circle cx="15" cy="16.500" r="13.200" fill="#ff6a3a" /><path d="M18.500 0q.5 3 3.500 5 3 0 4 3 3 4 2.500 10-2 10-13 12 8-5 7-13-1-7-5-9-2-3 1-8z" fill="#ffd53d" /><path d="M3 5.500q1 2 3 2 2-2 4-1.500 0 2 3 3.500-4 1-5 5 0 7 8 7 6-1 7-6 2 11-8 13-10 0-12-9-2-8 0-14z" fill="#ff9a2a" /><circle cx="16.500" cy="15" r="6" fill="#7542e5" /><path d="M9 13q5-1 7 2l-3 2q-3 1-4-4z" fill="#f04f3a" /></svg></Task>
    <Task $w={61.4} $line={50}><svg width="27" height="26" viewBox="0 0 27 26"><path d="M0 2q0-1 1-1h9l2 3h14q1 0 1 1v17q0 1-1 1H0z" fill="#f9c93c" /><path d="M0 1.500Q0 .5 1 .5h9.500L12 4H0z" fill="#d9940f" /><rect y="6" width="27" height="17" fill="#ffd766" /><path d="M5 24v-9q0-2 2-2h13q2 0 2 2v9h-4v-5H9v5z" fill="#3d8ed0" /></svg></Task>
    <Task $w={63} $line={39} $x={7} $stack><svg width="28" height="28" viewBox="-14 -14 28 28"><circle r="14" fill="#fbc62e" /><path d="M-12.100 -7A14 14 0 0 1 12.100 -7H0z" fill="#db4437" /><path d="M-12.100 -7A14 14 0 0 0 0 14L6 3 0 6-6 3z" fill="#1e9e57" /><path d="M-12 -7H12L6 0H-6z" fill="#db4437" /><path d="M0 -6.400H12.500A14 14 0 0 1 0 14L6 2z" fill="#fbc62e" /><circle r="6.400" fill="#fff" /><circle r="5.100" fill="#4285f4" /></svg></Task>
    <Task $w={61.9}><svg width="28" height="28" viewBox="0 0 28 28"><path d="M0 28l2-7.500A13.700 13.700 0 1 1 7.500 26z" fill="#fff" /><circle cx="14.200" cy="13.800" r="11.300" fill="#2bc63f" /><path d="M9 7.500q2-1 2.500 0l1.300 3q0 1-1.300 2 1.500 3 4.500 4.300l1.700-2q1 0 3.800 1.700 0 4-4 4-4 0-7.500-4-3.500-3.700-3-6.500.3-1.500 2-2.500z" fill="#fff" /></svg></Task>
    <Task><svg width="28" height="28" viewBox="0 0 28 28"><rect x="2" y="2" width="24" height="24" rx="12" fill="#0f8be0" /><circle cx="8.500" cy="8.500" r="8" fill="#1597ea" /><circle cx="19.500" cy="19.500" r="8" fill="#0878d4" /><text x="14" y="20.500" fontSize="18" fontWeight="bold" textAnchor="middle" fill="#fff" fontFamily="Open Sans">S</text></svg></Task>
    <Task><svg width="28" height="28" viewBox="0 0 28 28"><circle cx="14" cy="14" r="14" fill="#2fa3dc" /><path d="M5 13.700L22 7l-3 14-5-3.500-2.500 2.500-.5-4.500z" fill="#fff" /><path d="M11 15.500L19 9.500l-6 7-1.500 3.500z" fill="#b9d9ec" /></svg></Task>
    <Task><svg width="30" height="28" viewBox="0 0 30 28"><circle cx="16" cy="5" r="4.500" fill="#7b83eb" /><circle cx="26" cy="6.500" r="3" fill="#5059c9" /><path d="M20 11h9v8q0 5-5 5z" fill="#5059c9" /><path d="M8 11h15v9q0 7-7 7-6 0-7-5z" fill="#7b83eb" /><rect y="7" width="15" height="15" rx="1.500" fill="#4b53bc" /><path d="M4 11h7.500M7.800 11v8" stroke="#fff" strokeWidth="2" /></svg></Task>
    <Task $line={50}><svg width="31" height="32" viewBox="0 0 31 32"><circle cx="15" cy="15" r="15" fill="#5865f2" /><path d="M6 19q0-7 3-10l4-1 1 1.500h3L18 8l4 1q3 4 3 10-3 3-5 3l-1-2h-8l-1 2q-2 0-4-3z" fill="#fff" /><circle cx="11.500" cy="15" r="2" fill="#5865f2" /><circle cx="19" cy="15" r="2" fill="#5865f2" /><circle cx="22.500" cy="23.500" r="8.500" fill="#ed5050" /><circle cx="22.500" cy="23.500" r="4" fill="#fff" /></svg></Task>
    <Task $w={62.5} />
    <Task $w={63} $line={60} $x={2}><ActivePlate><FusionLogo s={30} big /></ActivePlate></Task>
    <Task $line={50}><svg width="30" height="30" viewBox="0 0 30 30"><rect width="30" height="30" fill="#fff" /><path d="M0 0h6v2L2 6H0zM30 0h-6v2l4 4h2zM0 30h6v-2l-4-4H0zM30 30h-6v-2l4-4h2z" fill="#8bd00e" /><circle cx="15" cy="15" r="13" fill="none" stroke="#7fc90c" strokeWidth="3.600" /><path d="M0 12h7v2h23v2.500H7V18H0z" fill="#444" /></svg></Task>
    <Task $line={50}><svg width="28" height="28" viewBox="0 0 28 28"><rect width="28" height="28" rx="5" fill="#1f969b" /><path d="M14 14q-3-4-5.500-4a4 4 0 0 0 0 8q2.500 0 5.500-4t5.500-4a4 4 0 0 1 0 8q-2.500 0-5.500-4z" fill="none" stroke="#e6f5f5" strokeWidth="1.700" /></svg></Task>
    <Weather>
      <svg width="26" height="24" viewBox="0 0 26 24"><circle cx="9" cy="9" r="8.500" fill="#f5b82e" /><path d="M6 21q-6-1-5-6 1-4 6-4 2-5 7.500-4Q20 8 20 13q5 0 5.500 4 0 4-5 4.500z" fill="#cfe6f8" /><path d="M6 21q-4-1-4-3l22 0q-1 3-4 3.500z" fill="#a4d0f2" /></svg>
      <WeatherText $ml={13} $ls={-0.2}>30°C</WeatherText><WeatherText $ml={12}>Mostly cloudy</WeatherText>
    </Weather>
    <TrayIcon><svg width="15" height="9" viewBox="0 0 15 9"><path d="M.5 8l7-7 7 7" fill="none" stroke="#eee" strokeWidth="1.400" /></svg></TrayIcon>
    <TrayIcon><svg width="20" height="20" viewBox="0 0 20 20"><path d="M1 3.500L5.500 1 10 3.500 5.500 6.500zM10 3.500L14.500 1 19 3.500 14.500 6.500zM10 10l4.500-3L19 10l-4.500 2.500zM11 14l3.500 2L12 18z" fill="#fff" /><rect y="8" width="11" height="12" rx="2" fill="#d3142c" /><text x="5.500" y="17.500" fontSize="10" fontWeight="bold" textAnchor="middle" fill="#fff">1</text></svg></TrayIcon>
    <TrayIcon><svg width="16" height="17" viewBox="0 0 16 17" fill="none" stroke="#ddd" strokeWidth="1.400"><path d="M1 15Q1 2 15 1M4.500 16Q4.500 6 15 5M8 16Q8 10 15 9M11.500 16Q12 13 15 12.500" /><path d="M13 14.500h2.500V17H13z" fill="#eee" stroke="none" /></svg></TrayIcon>
    <TrayIcon><svg width="21" height="17" viewBox="0 0 21 17"><path d="M4 13q-4 0-4-3.500T4 6q2-6 7-6t6 5q4 1 4 4 0 4-4 4z" fill="#ccc" /><path d="M4 13q-4 0-4-3.500T4 6l9 7z" fill="#f5f5f5" /><path d="M15 5l6 11.500H9z" fill="#fbc62e" /><path d="M15 9v4M15 14.300v1.300" stroke="#222" strokeWidth="1.300" /></svg></TrayIcon>
    <TrayIcon><svg width="19" height="16" viewBox="0 0 19 16" fill="none" stroke="#ddd" strokeWidth="1.200"><path d="M.6 5.500h3L8 1.500v13L3.600 10.500h-3zM10.500 6q1.500 2 0 4" /><path d="M13 4q3 4 0 8M15.500 2q4.500 6 0 12" stroke="#999" /></svg></TrayIcon>
    <Lang>ENG</Lang>
    <Clock>10:25 am<br />6/8/2021</Clock>
    <Notice><svg width="30" height="32" viewBox="0 0 30 32"><path d="M0 2h20v16H9v3l-4-3H0z" fill="#fff" /><path d="M4 6h12M4 9.500h12M4 13h7" stroke="#333" strokeWidth="1.300" /><circle cx="20" cy="22" r="10" fill="#333238" stroke="#777" /><text x="20" y="27" fontSize="13" fontWeight="bold" textAnchor="middle" fill="#fff">8</text></svg></Notice>
    <ShowDesktop />
  </Taskbar>
);

const Chev = () => <svg width="5" height="9" viewBox="0 0 5 9"><path d="M0 1.500l3.500 3L0 7.500M4.500 1L1 4.500 4.500 8" fill="none" stroke="#222" strokeWidth="1.200" /></svg>;

export default function App() {
  return (
    <Screen>
      <GlobalStyle />
      <TopEdge />
      <Desktop>
        <Window>
          <TitleBar>
            <FusionLogo s={19} /><AppTitle>Autodesk Fusion 360 (Education License)</AppTitle>
            <WinButtons>
              <WinButton><svg width="13" height="13" viewBox="0 0 13 13"><path d="M0 6.500h13" stroke="#111" strokeWidth="1.200" /></svg></WinButton>
              <WinButton><svg width="13" height="13" viewBox="0 0 13 13"><rect x=".6" y=".6" width="11.800" height="11.800" fill="none" stroke="#111" strokeWidth="1.200" /></svg></WinButton>
              <WinButton><svg width="13" height="13" viewBox="0 0 13 13"><path d="M0 0l13 13M13 0L0 13" stroke="#222" strokeWidth="1.200" /></svg></WinButton>
            </WinButtons>
          </TitleBar>
          <AppTabStrip />
          <AppRibbon />
          <Viewport>
            <ModelScene />
            <Overlay>
              <LeftColumn>
                <PanelHead><Rewind /><PanelTitle $pl={12} $ls={-0.6}>BROWSER</PanelTitle><Bullet /><Grip /></PanelHead>
                <BrowserTree />
                <PanelHead><PanelTitle $pl={25} $ls={-1}>COMMENTS</PanelTitle><Bullet plus /><Grip /></PanelHead>
              </LeftColumn>
              <NavBar><NavIcons /></NavBar>
              <RightColumn>
                <CubeBox><ViewCube /></CubeBox>
                <SketchPalette />
                <SketchName>Sketch21</SketchName>
              </RightColumn>
            </Overlay>
          </Viewport>
          <AppTimeline />
        </Window>
        <Behind>
          <Slice $h={53} $bg="#f7f7f7" /><Slice $h={38} $t="#ccc" /><Slice $h={29} $t="#bbb" /><Slice $h={24} $bg="#d2d2d2" $t="#999"><Chev /></Slice>
          <Slice $h={53} $bg="#dedede" /><Slice $h={219} $bg="#ececec" $t="#777" $r /><Slice $h={29} $t="#888" /><Slice $h={24} $bg="#cfcfcf" $t="#888"><Chev /></Slice>
          <Slice $h={50} $bg="#f2f2f2" $t="#666" $r /><Slice $h={188} $bg="#bdbdbd" $r /><Slice $h={21} $bg="#f2f2f2" $r /><Slice $h={20} $t="#555" /><Slice $h={20} $t="#888" $bg="#f0f0f0" />
        </Behind>
      </Desktop>
      <AppTaskbar />
    </Screen>
  );
}
